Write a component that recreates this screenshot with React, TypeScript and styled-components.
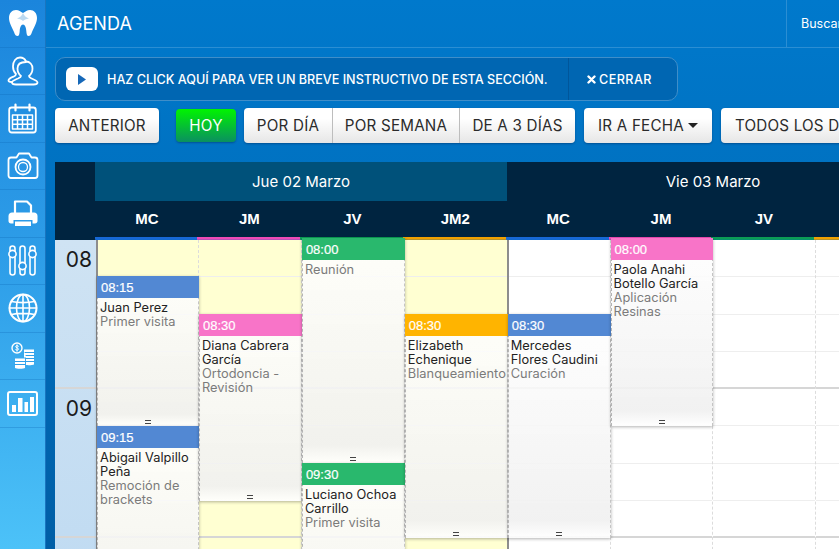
import React from "react";
import styled, { createGlobalStyle } from "styled-components";

const Global = createGlobalStyle`
  html, body { margin: 0; padding: 0; height: 100%; overflow: hidden; }
  body { font-family: "Inter", "Liberation Sans", sans-serif; background: #0073c4; }
  * { box-sizing: border-box; }
`;

const Page = styled.div`
  width: 839px; height: 549px; overflow: hidden; display: flex;
  background: linear-gradient(180deg, #0079cc 0%, #0070bf 40%, #005ea6 100%);
`;
const Sidebar = styled.nav`
  width: 46px; flex: none; display: flex; flex-direction: column;
  background: linear-gradient(180deg, #1b85dc 0%, #2f9fe9 50%, #4cc2f8 100%);
  border-right: 1px solid #1a75bf;
`;
const SideItem = styled.div`
  height: 47.5px; flex: none; display: flex; align-items: center; justify-content: center;
  border-bottom: 1px solid rgba(10, 100, 180, .28);
`;
const Main = styled.div`
  flex: 1; min-width: 0; display: flex; flex-direction: column;
`;
const TopBar = styled.header`
  height: 48px; flex: none; display: flex; justify-content: space-between; align-items: stretch;
  border-bottom: 1px solid #2b8ed3; padding-left: 11px;
`;
const Title = styled.h1`
  margin: 0; align-self: center; font-size: 18px; font-weight: 400; color: #fff; letter-spacing: .1px;
`;
const Search = styled.div`
  width: 53px; border-left: 1px solid #2b8ed3; color: #fff; font-size: 12.5px;
  display: flex; align-items: center; padding-left: 14px; white-space: nowrap; overflow: hidden;
`;
const Banner = styled.div`
  margin: 9px 0 0 9px; width: 623px; height: 44px; flex: none; display: flex; align-items: stretch;
  border: 1px solid #3f8ec9; border-radius: 10px; background: #0066b2; color: #fff;
`;
const BannerMain = styled.div`
  width: 513px; flex: none; display: flex; align-items: center; gap: 9px; padding-left: 10px;
  border-right: 1px solid #00569b; font-size: 12.6px; font-weight: 500; white-space: nowrap;
`;
const PlayButton = styled.div`
  width: 32px; height: 24px; flex: none; background: #fff; border-radius: 6px;
  display: flex; align-items: center; justify-content: center;
`;
const BannerClose = styled.div`
  flex: 1; display: flex; align-items: center; gap: 3px; padding-left: 18px;
  font-size: 12.6px; font-weight: 500; letter-spacing: .45px;
`;
const Toolbar = styled.div`
  margin: 7px 0 0 9px; flex: none; display: flex; align-items: center; white-space: nowrap;
`;
const Button = styled.div<{ $w: number; $h?: number; $ml?: number; $active?: boolean }>`
  width: ${p => p.$w}px; height: ${p => p.$h ?? 35}px; margin-left: ${p => p.$ml ?? 0}px; flex: none;
  display: flex; align-items: center; justify-content: center; gap: 4px;
  border-radius: 4px; font-size: 15.2px; letter-spacing: .2px; color: ${p => p.$active ? "#fff" : "#2b2b2b"};
  background: ${p => p.$active ? "linear-gradient(180deg,#00f400,#0a9060)" : "linear-gradient(180deg,#fff 30%,#e6e6e6)"};
  box-shadow: 0 1px 2px rgba(0, 40, 90, .45);
`;
const Group = styled.div`
  display: flex; flex: none; margin-left: 8px; border-radius: 4px; box-shadow: 0 1px 2px rgba(0, 40, 90, .45);
`;
const GroupButton = styled.div<{ $w: number }>`
  width: ${p => p.$w}px; height: 35px; display: flex; align-items: center; justify-content: center;
  font-size: 15.2px; letter-spacing: .2px; color: #2b2b2b; background: linear-gradient(180deg,#fff 30%,#e6e6e6);
  & + & { border-left: 1px solid #bdbdbd; }
  &:first-child { border-radius: 4px 0 0 4px; }
  &:last-child { border-radius: 0 4px 4px 0; }
`;
const Caret = styled.span`
  width: 0; height: 0; border-left: 5px solid transparent; border-right: 5px solid transparent;
  border-top: 5px solid #222;
`;
const Calendar = styled.section`
  margin: 19px 0 0 9px; width: 870px; flex: none;
`;
const DayRow = styled.div`
  height: 39px; display: grid; grid-template-columns: 40px 412px 412px; background: #002440;
`;
const DayCell = styled.div<{ $today?: boolean }>`
  display: flex; align-items: center; justify-content: center; color: #fff; font-size: 15px;
  background: ${p => p.$today ? "#00517a" : "transparent"};
`;
const DocRow = styled.div`
  height: 36px; display: grid; grid-template-columns: 41px 102px repeat(7, 102.9px); background: #002440;
`;
const DocCell = styled.div`
  display: flex; align-items: center; justify-content: center; padding-bottom: 2px; color: #fff;
  font: 700 15px "Liberation Sans", Arial, sans-serif;
`;
const Body = styled.div`
  display: grid; grid-template-columns: 41px 102px repeat(7, 102.9px);
`;
const TimeCol = styled.div`
  border-top: 3px solid #002440;
  background: linear-gradient(180deg, #cfe3f3, #c0dbf2);
`;
const Hour = styled.div`
  height: 149px; padding: 8px 4px 0 0; text-align: right; font-size: 21px; color: #1a1a1a;
  border-bottom: 2px solid #d6d6d6; line-height: 24px;
`;
const Column = styled.div`
  position: relative; display: flex; flex-direction: column;
`;
const ColorBar = styled.div<{ $color: string }>`
  height: 3px; flex: none; margin-left: -1px;
  background: linear-gradient(180deg, ${p => p.$color} 60%, ${p => p.$color}99);
`;
const SlotArea = styled.div<{ $today?: boolean; $divider?: boolean }>`
  position: relative; flex: 1; background: ${p => p.$today ? "#ffffd2" : "#fff"};
  border-left: ${p => p.$divider ? "2px solid #8d8d8d" : "1px dashed #dcdcdc"};
`;
const Slot = styled.div<{ $hour?: boolean }>`
  height: 37.25px;
  border-bottom: ${p => p.$hour ? "2px solid #d6d6d6" : "1px solid #eeeeee"};
`;
const Event = styled.article<{ $top: number; $height: number; $divider?: boolean }>`
  position: absolute; left: ${p => p.$divider ? -1 : 0}px; right: -1px;
  top: ${p => p.$top}px; height: ${p => p.$height}px; z-index: 1;
  background: linear-gradient(180deg, rgba(255,255,255,.88) 0%, rgba(240,240,240,.9) 92%, rgba(255,255,255,.9) 100%);
  border-left: 1px dashed #b4b4b4; border-right: 1px dashed #c4c4c4;
  box-shadow: 0 1px 3px rgba(0,0,0,.3);
`;
const EventTime = styled.div<{ $color: string }>`
  height: 22px; margin: 0 -1px; padding-left: 4px; background: ${p => p.$color}; color: #fff;
  display: flex; align-items: center; font: 500 13px "Liberation Sans", Arial, sans-serif;
  -webkit-text-stroke: .2px #fff;
`;
const EventBody = styled.div`
  padding: 3px 2px 0 2px; font-size: 12.8px; letter-spacing: .05px; line-height: 14px; color: #222; white-space: nowrap;
`;
const Sub = styled.div`
  color: #7b7b7b;
`;
const Handle = styled.div`
  position: absolute; left: 50%; bottom: 2px; width: 6px; height: 4px; margin-left: -3px;
  border-top: 1px solid #444; border-bottom: 1px solid #444;
`;

const I = { fill: "none", stroke: "#fff", strokeWidth: 1.8, strokeLinecap: "round", strokeLinejoin: "round" } as const;

const Tooth = () => (
  <svg width="28" height="26" viewBox="0 0 28 26">
    <path fill="#fff" d="M7 0C3 0 0 3 0 8c0 5 3 9 5 14 1 3 2 4 3.500 4 1.500 0 2-2 2.200-5 .2-3.500 1.300-6.500 3.300-6.500s3.100 3 3.300 6.500c.2 3 .7 5 2.200 5s2.500-1 3.500-4c2-5 5-9 5-14 0-5-3-8-7-8-3 0-4.500 1.500-7 3C11.500 1.500 10 0 7 0z"/>
    <path fill="#bcd9f0" d="M14 3c-1 3-4 5-6 5.500 3 .5 5 1.500 6 2.500 1-1 3-2 6-2.500-2-.5-5-2.500-6-5.500z"/>
  </svg>
);
const User = () => (
  <svg width="32" height="30" viewBox="0 0 32 30" {...I}>
    <path d="M9 18c-2-1.800-3-4.500-3-7.500C6 5 9 1.500 13 1.500c2.800 0 5 1.500 6 4M9 18c0 1.200-1 2-2.500 2.700C4 21.700 1.500 23 1.500 24.500c0 1 1 1.500 3 1.500"/>
    <path d="M19 5.500c3.800 0 6.500 3 6.500 7 0 3.200-1.300 5.800-3.500 7.500 0 1.200.8 1.800 2.500 2.500 2.500 1 6 2.200 6 4 0 1.300-1.500 2-4 2H9c-2.500 0-4-.8-4-2 0-1.800 3.500-3 6-4 1.800-.8 3-1.500 3-2.500-2.200-1.700-3.500-4.300-3.500-7.500 0-4 2.700-6.500 8.500-6.500z"/>
  </svg>
);
const CalendarIcon = () => (
  <svg width="29" height="31" viewBox="0 0 29 31" {...I}>
    <rect x="1.200" y="4.500" width="26.600" height="25" rx="2.500"/>
    <path d="M7.500 1.500v6M21.500 1.500v6" strokeWidth="2.200"/>
    <path strokeWidth="1.500" d="M4.500 12h20v14h-20zM4.500 16.700h20M4.500 21.300h20M9.500 12v14M14.500 12v14M19.500 12v14"/>
  </svg>
);
const CameraIcon = () => (
  <svg width="32" height="27" viewBox="0 0 32 27" {...I}>
    <path d="M4 5.500h5.500L12 1.500h10l2.500 4H28c1.500 0 2.500 1 2.500 2.500v15.500c0 1.500-1 2.500-2.500 2.500H4c-1.500 0-2.500-1-2.500-2.500V8c0-1.500 1-2.500 2.500-2.500z"/>
    <circle cx="16" cy="15" r="7.500"/><circle cx="16" cy="15" r="4.500" strokeWidth="1.300"/>
  </svg>
);
const PrinterIcon = () => (
  <svg width="30" height="27" viewBox="0 0 30 27">
    <path d="M7 13V1.500h12l4 4V13" fill="none" stroke="#fff" strokeWidth="2.200" strokeLinejoin="round"/>
    <path fill="#fff" d="M4 12.500h22c2 0 3.500 1.500 3.500 3.500v5c0 1.500-1 2.500-2.500 2.500h-2.500V20h-19v3.500H3C1.500 23.500.5 22.500.5 21v-5c0-2 1.500-3.500 3.500-3.500z"/>
    <rect x="7" y="21.500" width="16" height="4.500" fill="#fff"/>
  </svg>
);
const SlidersIcon = () => (
  <svg width="31" height="31" viewBox="0 0 31 31" {...I} strokeWidth={1.6}>
    <rect x="3" y="1" width="5" height="29" rx="2.500"/><rect x="13" y="1" width="5" height="29" rx="2.500"/><rect x="23" y="1" width="5" height="29" rx="2.500"/>
    <circle cx="5.500" cy="9" r="3.600" fill="#2a97e6"/><circle cx="15.500" cy="21" r="3.600" fill="#2a97e6"/><circle cx="25.500" cy="9" r="3.600" fill="#2a97e6"/>
  </svg>
);
const GlobeIcon = () => (
  <svg width="30" height="30" viewBox="0 0 30 30" {...I} strokeWidth={1.6}>
    <circle cx="15" cy="15" r="13.500" strokeWidth="2"/>
    <ellipse cx="15" cy="15" rx="6.500" ry="13.500"/>
    <path d="M15 1.500v27M1.500 15h27M3.500 8.500c6 1.500 17 1.500 23 0M3.500 21.500c6-1.500 17-1.500 23 0"/>
  </svg>
);
const CoinsIcon = () => (
  <svg width="24" height="27" viewBox="0 0 24 27" {...I} strokeWidth={1.4}>
    <circle cx="6" cy="6" r="5"/>
    <path d="M7.500 4.200C7 3.500 5 3.300 4.700 4.500c-.3 1.500 2.800 1 2.800 2.700 0 1.200-2.300 1.200-3 .3M6 2.800v6.400" strokeWidth="1"/>
    <path fill="#fff" stroke="none" d="M4 16.500h10v9.500c-1 1-9 1-10 0zM13 7.500h10v15c-.7.600-5 .8-8 .6V15.500h-2z"/>
    <path stroke="#2f9fe9" strokeWidth="1" d="M4 19.500h10M4 22.500h10M14 10.500h9M15 13.500h8M15 16.500h8M15 19.500h8"/>
  </svg>
);
const ChartIcon = () => (
  <svg width="31" height="25" viewBox="0 0 31 25">
    <rect x="1" y="1" width="29" height="23" rx="2" fill="none" stroke="#fff" strokeWidth="2"/>
    <path fill="#fff" d="M5 14h4v7H5zM11 7h4.500v14H11zM17.500 11H21v10h-3.500zM23 6h4v15h-4z"/>
  </svg>
);

type Ev = { top: number; height: number; color: string; time: string; name?: string[]; sub: string[] };
const BLUE = "#5288d3", PINK = "#f874c8", GREEN = "#29b86d", ORANGE = "#ffb400";

const columns: { doc: string; bar: string; today: boolean; divider?: boolean; events: Ev[] }[] = [
  { doc: "MC", bar: "#1768d6", today: true, divider: true, events: [
    { top: 36, height: 150, color: BLUE, time: "08:15", name: ["Juan Perez"], sub: ["Primer visita"] },
    { top: 186, height: 200, color: BLUE, time: "09:15", name: ["Abigail Valpillo", "Peña"], sub: ["Remoción de", "brackets"] },
  ] },
  { doc: "JM", bar: "#ee4ab6", today: true, events: [
    { top: 74, height: 187, color: PINK, time: "08:30", name: ["Diana Cabrera", "García"], sub: ["Ortodoncia -", "Revisión"] },
  ] },
  { doc: "JV", bar: "#0b9c55", today: true, events: [
    { top: -2, height: 225, color: GREEN, time: "08:00", sub: ["Reunión"] },
    { top: 223, height: 200, color: GREEN, time: "09:30", name: ["Luciano Ochoa", "Carrillo"], sub: ["Primer visita"] },
  ] },
  { doc: "JM2", bar: "#f0a000", today: true, events: [
    { top: 74, height: 224, color: ORANGE, time: "08:30", name: ["Elizabeth", "Echenique"], sub: ["Blanqueamiento"] },
  ] },
  { doc: "MC", bar: "#1768d6", today: false, divider: true, events: [
    { top: 74, height: 224, color: BLUE, time: "08:30", name: ["Mercedes", "Flores Caudini"], sub: ["Curación"] },
  ] },
  { doc: "JM", bar: "#ee4ab6", today: false, events: [
    { top: -2, height: 188, color: PINK, time: "08:00", name: ["Paola Anahi", "Botello García"], sub: ["Aplicación", "Resinas"] },
  ] },
  { doc: "JV", bar: "#0b9c55", today: false, events: [] },
  { doc: "JM2", bar: "#f0a000", today: false, events: [] },
];

const slots = [0, 1, 2, 3, 4, 5, 6, 7, 8];
const lines = (arr: string[]) => arr.map(t => <div key={t}>{t}</div>);

export default function App() {
  return (
    <>
      <Global />
      <Page>
        <Sidebar>
          <SideItem><Tooth /></SideItem>
          <SideItem><User /></SideItem>
          <SideItem><CalendarIcon /></SideItem>
          <SideItem><CameraIcon /></SideItem>
          <SideItem><PrinterIcon /></SideItem>
          <SideItem><SlidersIcon /></SideItem>
          <SideItem><GlobeIcon /></SideItem>
          <SideItem><CoinsIcon /></SideItem>
          <SideItem><ChartIcon /></SideItem>
        </Sidebar>
        <Main>
          <TopBar>
            <Title>AGENDA</Title>
            <Search>Buscar</Search>
          </TopBar>
          <Banner>
            <BannerMain>
              <PlayButton>
                <svg width="10" height="11" viewBox="0 0 10 11"><path d="M1 0l8 5.500-8 5.500z" fill="#1668b8" /></svg>
              </PlayButton>
              HAZ CLICK AQUÍ PARA VER UN BREVE INSTRUCTIVO DE ESTA SECCIÓN.
            </BannerMain>
            <BannerClose>
              <svg width="9" height="9" viewBox="0 0 9 9"><path d="M1.500 1.500l6 6M7.500 1.500l-6 6" stroke="#fff" strokeWidth="2.400" strokeLinecap="round" /></svg>
              CERRAR
            </BannerClose>
          </Banner>
          <Toolbar>
            <Button $w={104}>ANTERIOR</Button>
            <Button $w={60} $h={33} $ml={17} $active>HOY</Button>
            <Group>
              <GroupButton $w={88}>POR DÍA</GroupButton>
              <GroupButton $w={127}>POR SEMANA</GroupButton>
              <GroupButton $w={116}>DE A 3 DÍAS</GroupButton>
            </Group>
            <Button $w={128} $ml={9}>IR A FECHA <Caret /></Button>
            <Button $w={206} $ml={9}>TODOS LOS DOCTORES</Button>
          </Toolbar>
          <Calendar>
            <DayRow>
              <div />
              <DayCell $today>Jue 02 Marzo</DayCell>
              <DayCell>Vie 03 Marzo</DayCell>
            </DayRow>
            <DocRow>
              <div />
              {columns.map((c, i) => <DocCell key={i}>{c.doc}</DocCell>)}
            </DocRow>
            <Body>
              <TimeCol>
                <Hour>08</Hour>
                <Hour>09</Hour>
              </TimeCol>
              {columns.map((c, i) => (
                <Column key={i}>
                  <ColorBar $color={c.bar} />
                  <SlotArea $today={c.today} $divider={c.divider}>
                    {slots.map(s => <Slot key={s} $hour={s % 4 === 3} />)}
                    {c.events.map(e => (
                      <Event key={e.time} $top={e.top} $height={e.height} $divider={c.divider}>
                        <EventTime $color={e.color}>{e.time}</EventTime>
                        <EventBody>
                          {e.name && lines(e.name)}
                          <Sub>{lines(e.sub)}</Sub>
                        </EventBody>
                        <Handle />
                      </Event>
                    ))}
                  </SlotArea>
                </Column>
              ))}
            </Body>
          </Calendar>
        </Main>
      </Page>
    </>
  );
}
